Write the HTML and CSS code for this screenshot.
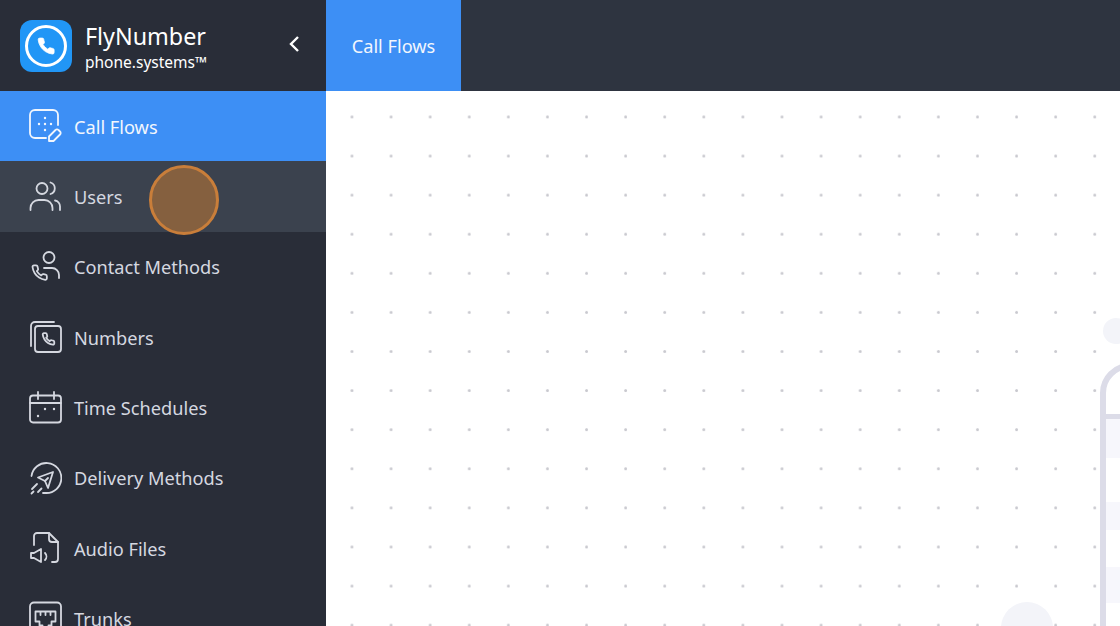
FILE: index.html
```html
<!DOCTYPE html>
<html>
<head>
    <meta charset="utf-8">
    <title>FlyNumber - Call Flows</title>
    <link rel="stylesheet" href="styles.css">
</head>
<body>
<div class="app">
    <div class="sidebar">
        <div class="brand">
            <div class="logo">
                <svg width="52" height="52" viewBox="0 0 52 52">
                    <circle class="logo-ring" cx="26" cy="26" r="19.5"/>
                    <g transform="translate(16.5 16.5) scale(0.8)">
                        <path class="logo-phone" d="M22 16.92v3a2 2 0 0 1-2.18 2 19.79 19.79 0 0 1-8.63-3.07 19.5 19.5 0 0 1-6-6 19.79 19.79 0 0 1-3.07-8.67A2 2 0 0 1 4.11 2h3a2 2 0 0 1 2 1.72 12.84 12.84 0 0 0 .7 2.81 2 2 0 0 1-.45 2.11L8.09 9.91a16 16 0 0 0 6 6l1.27-1.27a2 2 0 0 1 2.11-.45 12.84 12.84 0 0 0 2.81.7A2 2 0 0 1 22 16.92z"/>
                    </g>
                </svg>
            </div>
            <div class="brand-text">
                <div class="brand-name">FlyNumber</div>
                <div class="brand-sub">phone.systems™</div>
            </div>
            <svg class="collapse" width="12" height="18" viewBox="0 0 12 18">
                <path d="M10 2 L3 9 L10 16"/>
            </svg>
        </div>

        <div class="nav">
            <div class="nav-item active">
                <svg class="nav-icon" viewBox="0 0 34 34">
                    <path d="M30 16V6a5 5 0 0 0-5-5H7a5 5 0 0 0-5 5v18a5 5 0 0 0 5 5h11"/>
                    <path class="dot" d="M17 9h.01M11 15h.01M17 15h.01M23 15h.01M17 21h.01"/>
                    <path d="M21 27.500L27.500 21a2 2 0 0 1 3 0l1.500 1.500a2 2 0 0 1 0 3L25.500 32H21z"/>
                </svg>
                <span>Call Flows</span>
            </div>
            <div class="nav-item hover">
                <svg class="nav-icon" viewBox="0 0 34 34">
                    <circle cx="14" cy="9.500" r="5.500"/>
                    <path d="M22.500 3.500a6 6 0 0 1 0 11.500"/>
                    <path d="M2.500 31v-2a8 8 0 0 1 8-8h6a8 8 0 0 1 8 8v2"/>
                    <path d="M27 21.500a6 6 0 0 1 5 6V31"/>
                </svg>
                <span>Users</span>
            </div>
            <div class="nav-item">
                <svg class="nav-icon" viewBox="0 0 34 34">
                    <circle cx="21" cy="7.500" r="5.500"/>
                    <path d="M16 18h8a7 7 0 0 1 7 7v3"/>
                    <g transform="translate(3 14) scale(0.72)">
                        <path class="thin" d="M22 16.92v3a2 2 0 0 1-2.18 2 19.79 19.79 0 0 1-8.63-3.07 19.5 19.5 0 0 1-6-6 19.79 19.79 0 0 1-3.07-8.67A2 2 0 0 1 4.11 2h3a2 2 0 0 1 2 1.72 12.84 12.84 0 0 0 .7 2.81 2 2 0 0 1-.45 2.11L8.09 9.91a16 16 0 0 0 6 6l1.27-1.27a2 2 0 0 1 2.11-.45 12.84 12.84 0 0 0 2.81.7A2 2 0 0 1 22 16.92z"/>
                    </g>
                </svg>
                <span>Contact Methods</span>
            </div>
            <div class="nav-item">
                <svg class="nav-icon" viewBox="0 0 34 34">
                    <path d="M3 26V6a4 4 0 0 1 4-4h19"/>
                    <rect x="7" y="6" width="26" height="26" rx="3"/>
                    <g transform="translate(13.500 12) scale(0.58)">
                        <path class="thin" d="M22 16.92v3a2 2 0 0 1-2.18 2 19.79 19.79 0 0 1-8.63-3.07 19.5 19.5 0 0 1-6-6 19.79 19.79 0 0 1-3.07-8.67A2 2 0 0 1 4.11 2h3a2 2 0 0 1 2 1.72 12.84 12.84 0 0 0 .7 2.81 2 2 0 0 1-.45 2.11L8.09 9.91a16 16 0 0 0 6 6l1.27-1.27a2 2 0 0 1 2.11-.45 12.84 12.84 0 0 0 2.81.7A2 2 0 0 1 22 16.92z"/>
                    </g>
                </svg>
                <span>Numbers</span>
            </div>
            <div class="nav-item">
                <svg class="nav-icon" viewBox="0 0 34 34">
                    <rect x="2" y="5.500" width="31" height="27" rx="3"/>
                    <path d="M2 13h31M10 2v7M26 2v7"/>
                    <path class="dot" d="M17 19h.01M26 19h.01M10 26h.01"/>
                </svg>
                <span>Time Schedules</span>
            </div>
            <div class="nav-item">
                <svg class="nav-icon" viewBox="0 0 34 34">
                    <path d="M3.500 15A15 15 0 1 1 18 32h-3"/>
                    <path d="M10 16.500L25 11l-5 16-3-7z"/>
                    <path d="M17 20l3-3"/>
                    <path d="M4 28l5-5M3.500 32.500l2-2M10 31l3.500-3.500"/>
                </svg>
                <span>Delivery Methods</span>
            </div>
            <div class="nav-item">
                <svg class="nav-icon" viewBox="0 0 34 34">
                    <path d="M6 14V5a3 3 0 0 1 3-3h12l9 9v17a3 3 0 0 1-3 3h-3"/>
                    <path d="M21 2v6a3 3 0 0 0 3 3h6"/>
                    <path d="M3 22h3l7-4v13l-7-4H3z"/>
                    <path d="M17 22a5 5 0 0 1 0 7"/>
                </svg>
                <span>Audio Files</span>
            </div>
            <div class="nav-item">
                <svg class="nav-icon" viewBox="0 0 34 34">
                    <rect x="2" y="1.500" width="31" height="31" rx="4"/>
                    <path d="M7.500 10.500h20v10h-4v4h-3v3h-6v-3h-3v-4h-4z"/>
                    <path d="M12.500 11v3M17.500 11v3M22.500 11v3"/>
                </svg>
                <span>Trunks</span>
            </div>
        </div>
    </div>

    <div class="main">
        <div class="topbar">
            <div class="tab">Call Flows</div>
        </div>
        <div class="canvas">
            <!-- illustration of the empty state, cut off by the window -->
            <div class="blob blob-top"></div>
            <div class="blob blob-bottom"></div>
            <div class="sheet">
                <div class="sheet-head"></div>
                <div class="stripe stripe-1"></div>
                <div class="stripe stripe-2"></div>
                <div class="stripe stripe-3"></div>
            </div>
        </div>
    </div>
</div>

<div class="cursor"></div>
</body>
</html>
```

FILE: styles.css
```css
html, body {
    margin: 0;
    padding: 0;
    height: 100%;
    overflow: hidden;
}
body {
    font-family: "Noto Sans", "Open Sans", sans-serif;
    background-color: #ffffff;
}
.app {
    display: flex;
    height: 626px;
}

/* sidebar */
.sidebar {
    width: 326px;
    flex-shrink: 0;
    background-color: #292d38;
    overflow: hidden;
}
.brand {
    display: flex;
    align-items: center;
    height: 91px;
    padding-left: 20px;
    box-sizing: border-box;
}
.logo {
    width: 52px;
    height: 52px;
    border-radius: 12px;
    background-color: #2196f6;
    flex-shrink: 0;
}
.logo svg {
    display: block;
}
.logo-ring {
    fill: none;
    stroke: #ffffff;
    stroke-width: 3;
}
.logo-phone {
    fill: #ffffff;
    stroke: #ffffff;
    stroke-width: 1;
}
.brand-text {
    margin-left: 13px;
    margin-top: 2px;
    width: 203px;
    color: #ffffff;
}
.brand-name {
    font-size: 23.3px;
    line-height: 30px;
}
.brand-sub {
    font-size: 15.5px;
    line-height: 22px;
}
.collapse {
    margin-bottom: 4px;
    flex-shrink: 0;
}
.collapse path {
    fill: none;
    stroke: #ffffff;
    stroke-width: 2.4;
}
.nav-item {
    display: flex;
    align-items: center;
    gap: 12px;
    height: 70.33px;
    padding-left: 28px;
    font-size: 18.2px;
    color: #d5d8e0;
}
.nav-item span {
    padding-top: 1px;
}
.nav-item.active {
    background-color: #3d8ff5;
    color: #f2f6fd;
}
.nav-item.hover {
    background-color: #3b424e;
}
.nav-icon {
    width: 34px;
    height: 34px;
    flex-shrink: 0;
}
.nav-icon path, .nav-icon circle, .nav-icon rect {
    fill: none;
    stroke: currentColor;
    stroke-width: 1.800;
    stroke-linecap: round;
    stroke-linejoin: round;
}
.nav-icon .dot {
    stroke-width: 2.4;
}
.nav-icon .thin {
    vector-effect: non-scaling-stroke;
}

/* top bar and canvas */
.main {
    flex: 1;
    display: flex;
    flex-direction: column;
    min-width: 0;
}
.topbar {
    height: 91px;
    flex-shrink: 0;
    background-color: #2e3440;
    display: flex;
}
.tab {
    width: 135px;
    display: flex;
    align-items: center;
    justify-content: center;
    background-color: #3d8ff5;
    color: #f2f6fd;
    font-size: 18.2px;
}
.canvas {
    flex: 1;
    position: relative;
    overflow: hidden;
    background-color: #ffffff;
    background-image: radial-gradient(circle at 26px 26px, #c9c9cf 0, #c9c9cf 1px, transparent 1.800px);
    background-size: 39.100px 39.100px;
}
.blob {
    position: absolute;
    border-radius: 50%;
    background-color: #f3f4f9;
}
.blob-top {
    left: 777px;
    top: 227px;
    width: 26px;
    height: 26px;
}
.blob-bottom {
    left: 675px;
    top: 511px;
    width: 52px;
    height: 52px;
}
.sheet {
    position: absolute;
    left: 774px;
    top: 272px;
    width: 120px;
    height: 400px;
    box-sizing: border-box;
    border: 6px solid #dcdce8;
    border-radius: 30px 0 0 0;
    background-color: #ffffff;
}
.sheet-head {
    height: 45px;
    border-bottom: 5px solid #dcdce8;
}
.stripe {
    position: absolute;
    left: 0;
    right: 0;
    background-color: #f7f7fc;
}
.stripe-1 {
    top: 50px;
    height: 39px;
}
.stripe-2 {
    top: 133px;
    height: 28px;
}
.stripe-3 {
    top: 198px;
    height: 36px;
}

/* recording cursor over the Users row */
.cursor {
    position: absolute;
    left: 149px;
    top: 165px;
    width: 70px;
    height: 70px;
    box-sizing: border-box;
    border-radius: 50%;
    background-color: #85603f;
    border: 3px solid #c97e3a;
}
```
